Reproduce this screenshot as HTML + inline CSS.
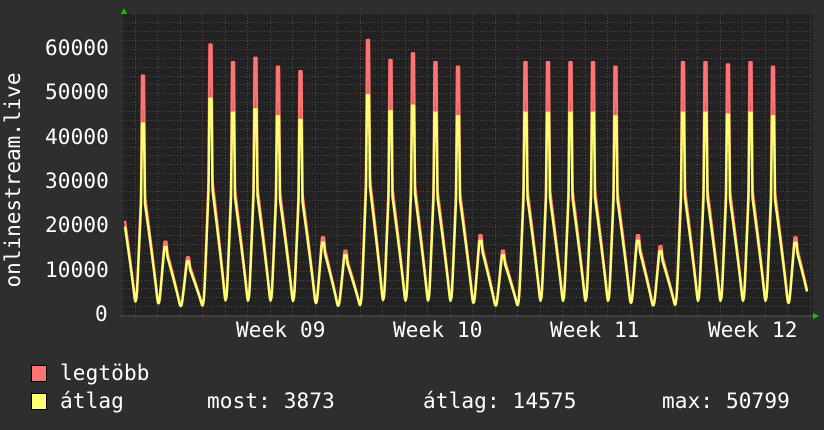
<!DOCTYPE html>
<html><head><meta charset="utf-8"><style>
html,body{margin:0;padding:0;background:#2e2e2e;}
body{width:824px;height:430px;overflow:hidden;position:relative;font-family:"DejaVu Sans Mono","Liberation Mono",monospace;color:#fff;}
.t{position:absolute;font-size:21px;white-space:pre;line-height:1;letter-spacing:0.15px;}
.sw{position:absolute;width:14px;height:15px;border:1px solid #000;}
</style></head><body>
<svg id="g" width="824" height="430" style="position:absolute;left:0;top:0">
<rect x="123" y="14" width="690" height="302" fill="#222"/>
<g id="grid"></g>
<path id="red" fill="none" stroke="#ff7373" stroke-width="2.5" stroke-linejoin="round"/>
<path id="yel" fill="none" stroke="#ffff73" stroke-width="2.5" stroke-linejoin="round"/>
<line x1="120" y1="316" x2="813" y2="316" stroke="#555" stroke-width="1"/>
<polygon points="121,14 127,14 124,8" fill="#0c0"/>
<polygon points="813,313 813,319 819,316" fill="#0c0"/>
<text x="13" y="180" transform="rotate(-90 13 180)" text-anchor="middle" dominant-baseline="central" fill="#fff" font-family="DejaVu Sans Mono, monospace" font-size="21">onlinestream.live</text>
</svg>
<div class="t" style="left:45px;top:38px">60000</div>
<div class="t" style="left:45px;top:82px">50000</div>
<div class="t" style="left:45px;top:127px">40000</div>
<div class="t" style="left:45px;top:171px">30000</div>
<div class="t" style="left:45px;top:215px">20000</div>
<div class="t" style="left:45px;top:260px">10000</div>
<div class="t" style="left:95px;top:304px">0</div>
<div class="t" style="left:236px;top:320px">Week 09</div>
<div class="t" style="left:393px;top:320px">Week 10</div>
<div class="t" style="left:550px;top:320px">Week 11</div>
<div class="t" style="left:708px;top:320px">Week 12</div>
<div class="sw" style="left:31px;top:365px;background:#ff7373"></div>
<div class="sw" style="left:31px;top:393px;background:#ffff73"></div>
<div class="t" style="left:60px;top:363px">legtöbb</div>
<div class="t" style="left:60px;top:391px">átlag</div>
<div class="t" style="left:207px;top:391px">most: 3873</div>
<div class="t" style="left:423px;top:391px">átlag: 14575</div>
<div class="t" style="left:662px;top:391px">max: 50799</div>
<script>
(function(){
var ns="http://www.w3.org/2000/svg",g=document.getElementById('grid');
function ln(x1,y1,x2,y2,c){var l=document.createElementNS(ns,'line');l.setAttribute('x1',x1);l.setAttribute('y1',y1);l.setAttribute('x2',x2);l.setAttribute('y2',y2);l.setAttribute('stroke',c);l.setAttribute('stroke-width',1);l.setAttribute('stroke-dasharray','1,2');g.appendChild(l);}
function Y(v){return 315-v*266/60000;}
for(var v=2000;v<=66000;v+=2000){var y=Math.round(Y(v))+.5;if(y<14)break;ln(123,y,813,y,(v%10000==0)?'#7a3a3a':'#4e4e4e');}
for(var x=134.5;x<813;x+=22.5){var maj=[202,359.5,517,674.5].some(function(m){return Math.abs(m-x)<1;});ln(Math.round(x)+.5,14,Math.round(x)+.5,318,maj?'#7a3a3a':'#4e4e4e');}
var R=[54000,16500,13000,61000,57000,58000,56000,55000,17500,14500,62000,57500,59000,57000,56000,18000,14500,57000,57000,57000,57000,56000,18000,15500,57000,57000,56500,57000,56000,17500];
var peaks=[];for(var k=-1;k<R.length+1;k++){var pr=k<0?30000:(k>=R.length?3000:R[k]);var hi=pr>30000;var py=hi?pr*0.8:pr*0.93;peaks.push({x:142+22.5*k,r:pr,y:py,hi:hi});}
var base=1000;
function f0(x,red){var best=base;for(var i=0;i<peaks.length;i++){var p=peaks[i],t=x-p.x,v=base;
var P=red?p.r:p.y, sh=p.hi?0.58:0.85, S=p.y*sh;
if(red)S*=1.07;
if(t>=-6&&t<-1){var s=(t+6)/5;v=base+(S-base)*Math.pow(s,1.1);}
else if(t>=-1&&t<0){v=S+(P-S)*(t+1);}
else if(t>=0&&t<2){v=P;}
else if(t>=2&&t<3){v=P+(S-P)*(t-2);}
else if(t>=3&&t<16.5){var d=1-(t-3)/13.5;v=base+(S-base)*Math.pow(d,0.9);}
if(v>best)best=v;}return best;}
function f(x,red){var v=f0(x,red);if(v<8000){var a=0,n=0;for(var d=-1.5;d<=1.5;d+=0.5){a+=f0(x+d,red);n++;}var m=a/n;var w=(8000-v)/8000;return v*(1-w)+m*w;}return v;}
function path(red){var s='';for(var x=125;x<=807;x+=0.5){s+=(x==125?'M':'L')+x+','+Y(f(x,red)).toFixed(1);}return s;}
document.getElementById('red').setAttribute('d',path(true));
document.getElementById('yel').setAttribute('d',path(false));
})();
</script>
</body></html>
